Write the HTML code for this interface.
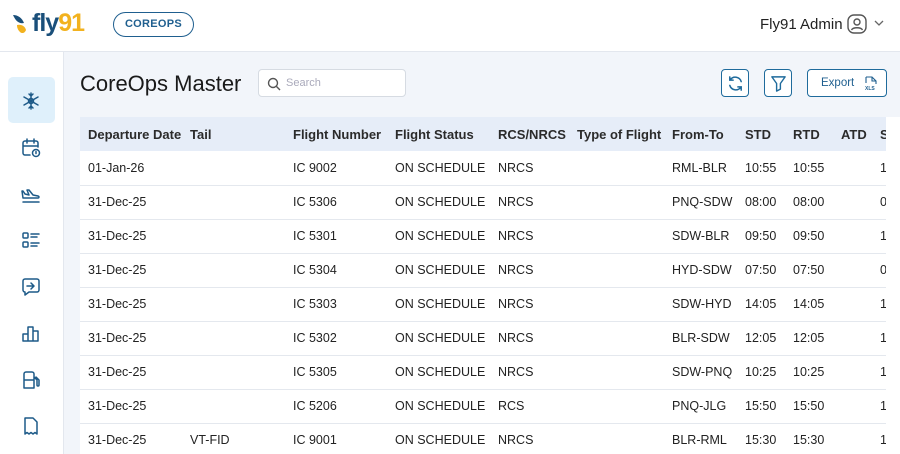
<!DOCTYPE html>
<html><head><meta charset="utf-8"><style>
*{margin:0;padding:0;box-sizing:border-box}
body{width:900px;height:454px;overflow:hidden;font-family:"Liberation Sans",sans-serif;background:#f2f5fa;position:relative;color:#222}
.top{position:absolute;left:0;top:0;width:900px;height:52px;background:#fff;border-bottom:1px solid #e3e7ee}
.side{position:absolute;left:0;top:52px;width:64px;height:402px;background:#fff;border-right:1px solid #e3e7ee}
.ic{position:absolute;left:20px;width:22px;height:22px}
.ic svg{width:22px;height:22px;fill:none;stroke:#1d5a88;stroke-width:1.5;stroke-linecap:round;stroke-linejoin:round}
.btn{position:absolute;border:1px solid #1f6b9c;border-radius:4px;background:#fff}
.tw{position:absolute;left:80px;top:117px;width:806px;height:337px;overflow:hidden}
table{width:806px;table-layout:fixed;border-collapse:collapse;font-size:12.5px}
th{background:#e6edf8;height:34px;text-align:left;font-weight:bold;color:#2b2b2b;padding:0;font-size:13px;white-space:nowrap;overflow:hidden}
td{height:34px;border-bottom:1px solid #e4e8ee;background:#fff;padding:0;color:#222;white-space:nowrap;overflow:hidden}
th:first-child,td:first-child{padding-left:8px}
</style></head><body>
<div class="top">
 <svg style="position:absolute;left:12px;top:13px" width="20" height="22" viewBox="0 0 20 22"><path d="M1 2c5 0 9 3 11 8-4 1-8-1-11-8z" fill="#1a4f7a"/><path d="M5 12c4-1 8 1 9 5-1 3-4 4-6 2-2-2-3-4-3-7z" fill="#f2b21f"/></svg>
 <div style="position:absolute;left:32px;top:9px;font-size:25px;font-weight:bold;letter-spacing:-1px;line-height:28px"><span style="color:#1a4f7a">fly</span><span style="color:#f2b21f">91</span></div>
 <div style="position:absolute;left:113px;top:12px;width:81px;height:25px;border:1.5px solid #1f5f8f;border-radius:13px;font-size:11px;font-weight:bold;color:#1f5f8f;text-align:center;line-height:22px;letter-spacing:.3px">COREOPS</div>
 <div style="position:absolute;left:760px;top:16px;font-size:15px;color:#222">Fly91 Admin</div>
 <svg style="position:absolute;left:847px;top:14px" width="20" height="20" viewBox="0 0 20 20" fill="none" stroke="#555" stroke-width="1.4"><rect x="1" y="1" width="18" height="18" rx="6"/><circle cx="10" cy="8" r="3"/><path d="M4.5 16c1.5-3 9.5-3 11 0"/></svg>
 <svg style="position:absolute;left:874px;top:20px" width="10" height="7" viewBox="0 0 10 7" fill="none" stroke="#666" stroke-width="1.3"><path d="M1 1l4 4 4-4"/></svg>
</div>
<div class="side">
 <div style="position:absolute;left:8px;top:25px;width:47px;height:46px;background:#dff0fb;border-radius:5px"></div>
 <div class="ic" style="top:38px"><svg viewBox="0 0 22 22"><path d="M11 3v16M4 7l14 8M4 15l14-8M9 4l2 2 2-2M9 18l2-2 2 2"/><circle cx="11" cy="11" r="2.5"/></svg></div>
 <div class="ic" style="top:85px"><svg viewBox="0 0 22 22"><path d="M10 18H5a2 2 0 0 1-2-2V6a2 2 0 0 1 2-2h11a2 2 0 0 1 2 2v4M3 9h15M7 2v4M14 2v4"/><circle cx="16" cy="16" r="3.5"/><path d="M16 14.5v2"/></svg></div>
 <div class="ic" style="top:131px"><svg viewBox="0 0 22 22"><path d="M3 19h16M3 15h15c1 0 1.5-1.5 0-2l-5-1-4-5H7l2 5-4-1-2-3H2l1 7z"/></svg></div>
 <div class="ic" style="top:177px"><svg viewBox="0 0 22 22"><rect x="3" y="4" width="5" height="5" rx="1"/><rect x="3" y="13" width="5" height="5" rx="1"/><path d="M11 5h8M11 8h6M11 14h8M11 17h6"/></svg></div>
 <div class="ic" style="top:224px"><svg viewBox="0 0 22 22"><path d="M5 3h12a2 2 0 0 1 2 2v9a2 2 0 0 1-2 2H9l-4 3v-3a2 2 0 0 1-2-2V5a2 2 0 0 1 2-2zM7 10h7M11 7l3 3-3 3"/></svg></div>
 <div class="ic" style="top:270px"><svg viewBox="0 0 22 22"><path d="M3 19V12h5v7M8 19V5h5v14M13 19V9h5v10H3"/></svg></div>
 <div class="ic" style="top:317px"><svg viewBox="0 0 22 22"><path d="M4 19V5a2 2 0 0 1 2-2h6a2 2 0 0 1 2 2v14H4zM4 11h10M14 8l3 3v5a1 1 0 0 0 2 0v-5l-3-3"/></svg></div>
 <div class="ic" style="top:363px"><svg viewBox="0 0 22 22"><path d="M5 19V3h8l4 4v12l-2-1.5-2 1.5-2-1.5-2 1.5-2-1.5z"/></svg></div>
</div>
<div style="position:absolute;left:80px;top:71px;font-size:22px;color:#1a1a1a">CoreOps Master</div>
<div style="position:absolute;left:258px;top:69px;width:148px;height:28px;background:#fff;border:1px solid #d6dbe2;border-radius:4px">
 <svg style="position:absolute;left:8px;top:7px" width="14" height="14" viewBox="0 0 14 14" fill="none" stroke="#555" stroke-width="1.4"><circle cx="6" cy="6" r="4.5"/><path d="M9.5 9.5L13 13"/></svg>
 <span style="position:absolute;left:27px;top:7px;font-size:11px;color:#aab">Search</span></div>
<div class="btn" style="left:721px;top:69px;width:28px;height:28px"><svg style="position:absolute;left:4px;top:4px" width="19" height="19" viewBox="0 0 20 20" fill="none" stroke="#1f6b9c" stroke-width="1.6" stroke-linecap="round"><path d="M16 8a6.5 6.5 0 0 0-11.5-2M4 12a6.5 6.5 0 0 0 11.5 2M4 3v3.5h3.5M16 17v-3.5h-3.5"/></svg></div>
<div class="btn" style="left:764px;top:69px;width:28px;height:28px"><svg style="position:absolute;left:5px;top:5px" width="17" height="17" viewBox="0 0 18 18" fill="none" stroke="#1f6b9c" stroke-width="1.5" stroke-linejoin="round"><path d="M2 2h14l-5 7v6l-4 2V9z"/></svg></div>
<div class="btn" style="left:807px;top:69px;width:80px;height:28px"><span style="position:absolute;left:13px;top:7px;font-size:11.5px;color:#1f5f8f">Export</span>
 <svg style="position:absolute;left:56px;top:6px" width="14" height="15" viewBox="0 0 14 15" fill="none" stroke="#1f5f8f" stroke-width="1.1"><path d="M2 1h6l4 4v3M2 1v6M8 1v4h4"/><text x="1" y="14" font-size="5" fill="#1f5f8f" stroke="none" font-family="Liberation Sans" font-weight="bold">XLS</text></svg></div>
<div style="position:absolute;left:886px;top:117px;width:14px;height:337px;background:#fff"></div>
<div class="tw"><table>
<colgroup><col style="width:110px"><col style="width:103px"><col style="width:102px"><col style="width:103px"><col style="width:79px"><col style="width:95px"><col style="width:73px"><col style="width:48px"><col style="width:48px"><col style="width:39px"><col style="width:6px"></colgroup>
<tr><th>Departure Date</th><th>Tail</th><th>Flight Number</th><th>Flight Status</th><th>RCS/NRCS</th><th>Type of Flight</th><th>From-To</th><th>STD</th><th>RTD</th><th>ATD</th><th>S</th></tr>
<tr><td>01-Jan-26</td><td></td><td>IC 9002</td><td>ON SCHEDULE</td><td>NRCS</td><td></td><td>RML-BLR</td><td>10:55</td><td>10:55</td><td></td><td>12</td></tr>
<tr><td>31-Dec-25</td><td></td><td>IC 5306</td><td>ON SCHEDULE</td><td>NRCS</td><td></td><td>PNQ-SDW</td><td>08:00</td><td>08:00</td><td></td><td>0</td></tr>
<tr><td>31-Dec-25</td><td></td><td>IC 5301</td><td>ON SCHEDULE</td><td>NRCS</td><td></td><td>SDW-BLR</td><td>09:50</td><td>09:50</td><td></td><td>1</td></tr>
<tr><td>31-Dec-25</td><td></td><td>IC 5304</td><td>ON SCHEDULE</td><td>NRCS</td><td></td><td>HYD-SDW</td><td>07:50</td><td>07:50</td><td></td><td>0</td></tr>
<tr><td>31-Dec-25</td><td></td><td>IC 5303</td><td>ON SCHEDULE</td><td>NRCS</td><td></td><td>SDW-HYD</td><td>14:05</td><td>14:05</td><td></td><td>1</td></tr>
<tr><td>31-Dec-25</td><td></td><td>IC 5302</td><td>ON SCHEDULE</td><td>NRCS</td><td></td><td>BLR-SDW</td><td>12:05</td><td>12:05</td><td></td><td>1</td></tr>
<tr><td>31-Dec-25</td><td></td><td>IC 5305</td><td>ON SCHEDULE</td><td>NRCS</td><td></td><td>SDW-PNQ</td><td>10:25</td><td>10:25</td><td></td><td>1</td></tr>
<tr><td>31-Dec-25</td><td></td><td>IC 5206</td><td>ON SCHEDULE</td><td>RCS</td><td></td><td>PNQ-JLG</td><td>15:50</td><td>15:50</td><td></td><td>1</td></tr>
<tr><td>31-Dec-25</td><td>VT-FID</td><td>IC 9001</td><td>ON SCHEDULE</td><td>NRCS</td><td></td><td>BLR-RML</td><td>15:30</td><td>15:30</td><td></td><td>1</td></tr>
</table></div>
</body></html>
